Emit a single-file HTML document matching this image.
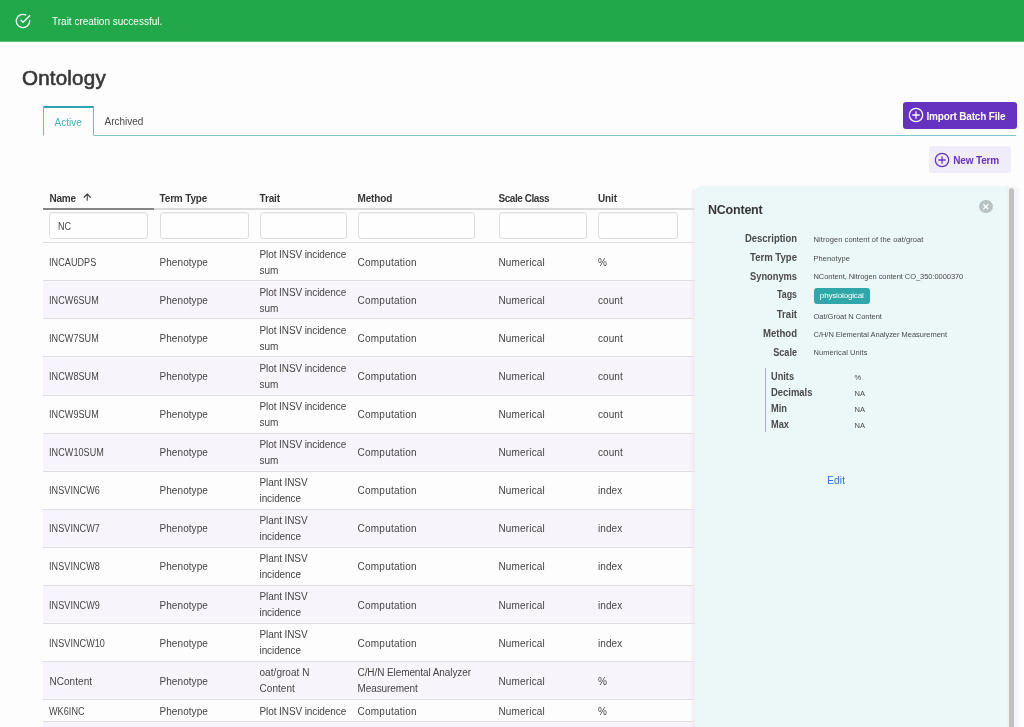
<!DOCTYPE html>
<html>
<head>
<meta charset="utf-8">
<title>Ontology</title>
<style>
*{box-sizing:border-box}
html,body{margin:0;padding:0}
body{width:1024px;height:727px;overflow:hidden;position:relative;background:#fdfdfd;font-family:"Liberation Sans",sans-serif;font-size:10px;color:#4a4a4a;line-height:16px}
#root{position:absolute;left:0;top:0;width:1024px;height:727px;overflow:hidden;will-change:transform}
.abs{position:absolute;white-space:nowrap}
#notif{left:0;top:0;width:1024px;height:41px;background:#20a84a;box-shadow:0 1px 0 #5cbf7b}
#notif .msg{left:52px;top:14px;color:#fff;font-size:10px}
#title{left:22px;top:66.3px;font-size:20.6px;font-weight:400;color:#383838;line-height:24px;letter-spacing:.18px;-webkit-text-stroke:.62px #383838}
#tabline{left:43px;top:134.5px;width:973px;height:1px;background:#7cc7cb}
#tab-active{left:43px;top:106px;width:51px;height:29.5px;border:1px solid #62bfc4;border-top:2px solid #2fa5ab;border-bottom:1px solid #fdfdfd;border-radius:1px 1px 0 0;background:#fdfdfd}
#tab-active span{left:10.5px;top:7px;color:#45b0b6}
#tab-arch{left:104.5px;top:113.5px;color:#4a4a4a}
.btn{border-radius:3px;font-weight:700}
#btn-import{left:902.5px;top:102px;width:114px;height:26.5px;background:#6633c0;color:#fff}
#btn-new{left:929px;top:146.25px;width:81.5px;height:26.25px;background:#f0ecfa;color:#6633c0}
/* table */
#tbl{left:43px;top:186px;width:660.5px}
td:first-child,th:first-child{padding-left:6.4px}
table{border-collapse:separate;border-spacing:0;table-layout:fixed;width:660.5px}
th{font-weight:700;color:#363636;letter-spacing:-.15px;text-align:left;padding:5px 6px 1px 6px;height:24px;border-bottom:2px solid #dbdbdb;line-height:16px;white-space:nowrap}
th.sorted{border-bottom-color:#858585}
td{padding:3.5px 6px 1.5px;border-bottom:1px solid #dedede;color:#454545;vertical-align:middle;line-height:16px;white-space:normal;letter-spacing:.07px}
tr.flt td{padding:2.2px 6px 0 6px;height:33.2px;vertical-align:top}
.inp{display:block;height:26.5px;border:1px solid #dedede;border-radius:3px;background:#fefefe;padding:4.8px 7.5px;box-shadow:inset 0 1px 1px rgba(10,10,10,.04)}
tr.s td{background:#f7f4fc}
tr.r td{height:38.1px}
tr.r1 td{height:22.1px}
.nm{letter-spacing:.15px}
.cm{letter-spacing:.24px}
.tr{letter-spacing:-.09px}
.t2{padding-top:2.9px!important;padding-bottom:2.1px!important}
.up{display:inline-block;transform:scaleX(.905);transform-origin:0 50%;white-space:nowrap}
/* panel */
#panel{left:695px;top:186px;width:311.5px;height:560px;background:#ecf8f8;border-radius:6px 0 0 0}
#pshadow{left:689.5px;top:189px;width:5.5px;height:560px;background:linear-gradient(to right,rgba(234,231,240,0),rgba(234,231,240,.35) 35%,rgba(232,229,236,.65));border-radius:5px 0 0 0}
#sbtrack{left:1006.5px;top:186px;width:9.5px;height:560px;background:linear-gradient(to right,#efefef,#f3f3f3 20%,#f6f6f6)}
#rshadow{left:1016px;top:188px;width:5px;height:560px;background:linear-gradient(to right,rgba(232,228,242,.4),rgba(232,228,242,0))}
#sbthumb{left:1008.55px;top:188px;width:5.15px;height:560px;background:#c1c1c1;border-radius:3px}
#ptitle{left:708px;top:201.8px;font-size:12.5px;font-weight:700;color:#363636;letter-spacing:-.22px}
.lbl{font-weight:700;color:#4a4a4a;text-align:right;width:100px;left:697px;transform-origin:100% 50%}
.val{left:813.5px;font-size:7.5px;color:#4a4a4a;letter-spacing:.07px}
#tag{left:813.7px;top:287.7px;width:56.1px;height:16.1px;background:#2fa7ab;border-radius:3px;color:#fff;font-size:8px;text-align:center;line-height:16.3px;letter-spacing:-.16px}
#vline{left:764.7px;top:368px;width:1.2px;height:63.5px;background:#79c8cc}
.sl{left:771px;font-weight:700;margin-top:.3px;transform-origin:0 50%}
.sv{left:854.5px;font-size:7.5px}
#edit{left:827.25px;top:473.2px;color:#3273dc;letter-spacing:.15px}
#close{left:979px;top:199.5px;width:13.5px;height:13.5px;border-radius:50%;background:rgba(10,10,10,.22)}
</style>
</head>
<body>
<div id="root">
<div id="notif" class="abs">
  <svg class="abs" style="left:14.75px;top:12.75px" width="16" height="16" viewBox="0 0 24 24" fill="none" stroke="#fff" stroke-width="2" stroke-linecap="round" stroke-linejoin="round"><path d="M22 11.08V12a10 10 0 1 1-5.93-9.14"/><polyline points="22 4 12 14.01 9 11.01"/></svg>
  <span class="abs msg">Trait creation successful.</span>
</div>
<div id="title" class="abs">Ontology</div>
<div id="tabline" class="abs"></div>
<div id="tab-active" class="abs"><span class="abs">Active</span></div>
<div id="tab-arch" class="abs">Archived</div>

<div id="btn-import" class="abs btn">
  <svg class="abs" style="left:5px;top:5.4px" width="16" height="16" viewBox="0 0 24 24" fill="none" stroke="#fff" stroke-width="1.9" stroke-linecap="round" stroke-linejoin="round"><circle cx="12" cy="12" r="10"/><line x1="12" y1="7.2" x2="12" y2="16.8"/><line x1="7.2" y1="12" x2="16.8" y2="12"/></svg>
  <span class="abs" style="left:24px;top:6.5px;letter-spacing:-.17px">Import Batch File</span>
</div>
<div id="btn-new" class="abs btn">
  <svg class="abs" style="left:5.2px;top:5.6px" width="16" height="16" viewBox="0 0 24 24" fill="none" stroke="#6633c0" stroke-width="1.9" stroke-linecap="round" stroke-linejoin="round"><circle cx="12" cy="12" r="10"/><line x1="12" y1="7.2" x2="12" y2="16.8"/><line x1="7.2" y1="12" x2="16.8" y2="12"/></svg>
  <span class="abs" style="left:24.25px;top:6.25px;letter-spacing:-.15px">New Term</span>
</div>

<div id="tbl" class="abs">
<table>
<colgroup><col style="width:110.5px"><col style="width:100px"><col style="width:98px"><col style="width:141px"><col style="width:99.5px"><col style="width:111.5px"></colgroup>
<thead>
<tr><th class="sorted">Name<svg style="display:inline-block;vertical-align:.7px;margin-left:6.9px" width="8.4" height="8" viewBox="0 0 8.4 8" fill="none" stroke="#3c3c3c" stroke-width="1.08" stroke-linecap="butt"><path d="M4.2 7.8V1M0.7 4.5L4.2 1L7.7 4.5"/></svg></th><th>Term Type</th><th>Trait</th><th>Method</th><th style="letter-spacing:-.45px">Scale Class</th><th>Unit</th></tr>
</thead>
<tbody>
<tr class="flt"><td><span class="inp" style="width:99.1px;padding-top:5.9px"><span class="up" style="transform:scaleX(.9)">NC</span></span></td><td><span class="inp" style="width:89px"></span></td><td><span class="inp" style="width:87px"></span></td><td><span class="inp" style="width:117px"></span></td><td><span class="inp" style="width:88.5px"></span></td><td><span class="inp" style="width:80px"></span></td></tr>
<tr class="r"><td><span class="up">INCAUDPS</span></td><td>Phenotype</td><td class="tr"><span style="white-space:nowrap">Plot INSV incidence</span><br>sum</td><td class="cm">Computation</td><td class="nm">Numerical</td><td>%</td></tr>
<tr class="r s"><td><span class="up">INCW6SUM</span></td><td>Phenotype</td><td class="tr"><span style="white-space:nowrap">Plot INSV incidence</span><br>sum</td><td class="cm">Computation</td><td class="nm">Numerical</td><td>count</td></tr>
<tr class="r"><td><span class="up">INCW7SUM</span></td><td>Phenotype</td><td class="tr"><span style="white-space:nowrap">Plot INSV incidence</span><br>sum</td><td class="cm">Computation</td><td class="nm">Numerical</td><td>count</td></tr>
<tr class="r s"><td><span class="up">INCW8SUM</span></td><td>Phenotype</td><td class="tr"><span style="white-space:nowrap">Plot INSV incidence</span><br>sum</td><td class="cm">Computation</td><td class="nm">Numerical</td><td>count</td></tr>
<tr class="r"><td><span class="up">INCW9SUM</span></td><td>Phenotype</td><td class="tr"><span style="white-space:nowrap">Plot INSV incidence</span><br>sum</td><td class="cm">Computation</td><td class="nm">Numerical</td><td>count</td></tr>
<tr class="r s"><td><span class="up">INCW10SUM</span></td><td>Phenotype</td><td class="tr"><span style="white-space:nowrap">Plot INSV incidence</span><br>sum</td><td class="cm">Computation</td><td class="nm">Numerical</td><td>count</td></tr>
<tr class="r"><td><span class="up">INSVINCW6</span></td><td>Phenotype</td><td class="tr t2">Plant INSV<br>incidence</td><td class="cm">Computation</td><td class="nm">Numerical</td><td>index</td></tr>
<tr class="r s"><td><span class="up">INSVINCW7</span></td><td>Phenotype</td><td class="tr t2">Plant INSV<br>incidence</td><td class="cm">Computation</td><td class="nm">Numerical</td><td>index</td></tr>
<tr class="r"><td><span class="up">INSVINCW8</span></td><td>Phenotype</td><td class="tr t2">Plant INSV<br>incidence</td><td class="cm">Computation</td><td class="nm">Numerical</td><td>index</td></tr>
<tr class="r s"><td><span class="up">INSVINCW9</span></td><td>Phenotype</td><td class="tr t2">Plant INSV<br>incidence</td><td class="cm">Computation</td><td class="nm">Numerical</td><td>index</td></tr>
<tr class="r"><td><span class="up">INSVINCW10</span></td><td>Phenotype</td><td class="tr t2">Plant INSV<br>incidence</td><td class="cm">Computation</td><td class="nm">Numerical</td><td>index</td></tr>
<tr class="r s"><td>NContent</td><td>Phenotype</td><td class="tr t2" style="letter-spacing:.05px">oat/groat N<br>Content</td><td class="tr t2">C/H/N Elemental Analyzer<br>Measurement</td><td class="nm">Numerical</td><td>%</td></tr>
<tr class="r1"><td><span class="up">WK6INC</span></td><td>Phenotype</td><td style="white-space:nowrap;letter-spacing:-.09px">Plot INSV incidence</td><td class="cm">Computation</td><td class="nm">Numerical</td><td>%</td></tr>
<tr class="r s"><td>&nbsp;</td><td></td><td></td><td></td><td></td><td></td></tr>
</tbody>
</table>
</div>

<div id="pshadow" class="abs"></div>
<div id="panel" class="abs"></div>
<div id="sbtrack" class="abs"></div>
<div id="rshadow" class="abs"></div>
<div id="sbthumb" class="abs"></div>
<div id="ptitle" class="abs">NContent</div>
<div id="close" class="abs"><svg class="abs" style="left:0;top:0" width="13.5" height="13.5" viewBox="0 0 13.5 13.5" stroke="#fff" stroke-width="1.25" stroke-linecap="round"><line x1="4.7" y1="4.7" x2="8.8" y2="8.8"/><line x1="8.8" y1="4.7" x2="4.7" y2="8.8"/></svg></div>

<div class="abs lbl" style="top:231.1px;transform:scaleX(0.945)">Description</div><div class="abs val" style="top:231.75px">Nitrogen content of the oat/groat</div>
<div class="abs lbl" style="top:250.1px;transform:scaleX(0.957)">Term Type</div><div class="abs val" style="top:251px">Phenotype</div>
<div class="abs lbl" style="top:268.5px;transform:scaleX(0.929)">Synonyms</div><div class="abs val" style="top:269px;letter-spacing:-.06px">NContent, Nitrogen content CO_350:0000370</div>
<div class="abs lbl" style="top:287.1px;transform:scaleX(0.885)">Tags</div><div id="tag" class="abs">physiological</div>
<div class="abs lbl" style="top:307.3px;transform:scaleX(0.959)">Trait</div><div class="abs val" style="top:308.5px;letter-spacing:-.02px">Oat/Groat N Content</div>
<div class="abs lbl" style="top:326.1px;transform:scaleX(0.956)">Method</div><div class="abs val" style="top:327.25px;letter-spacing:-.03px">C/H/N Elemental Analyzer Measurement</div>
<div class="abs lbl" style="top:344.75px;transform:scaleX(0.909)">Scale</div><div class="abs val" style="top:345.25px">Numerical Units</div>

<div id="vline" class="abs"></div>
<div class="abs sl" style="top:368.5px;transform:scaleX(0.92)">Units</div><div class="abs sv" style="top:370px">%</div>
<div class="abs sl" style="top:384.5px;transform:scaleX(0.945)">Decimals</div><div class="abs sv" style="top:386px">NA</div>
<div class="abs sl" style="top:400.5px;transform:scaleX(0.93)">Min</div><div class="abs sv" style="top:402px">NA</div>
<div class="abs sl" style="top:416.5px;transform:scaleX(0.925)">Max</div><div class="abs sv" style="top:418px">NA</div>

<div id="edit" class="abs">Edit</div>
</div>
</body>
</html>
